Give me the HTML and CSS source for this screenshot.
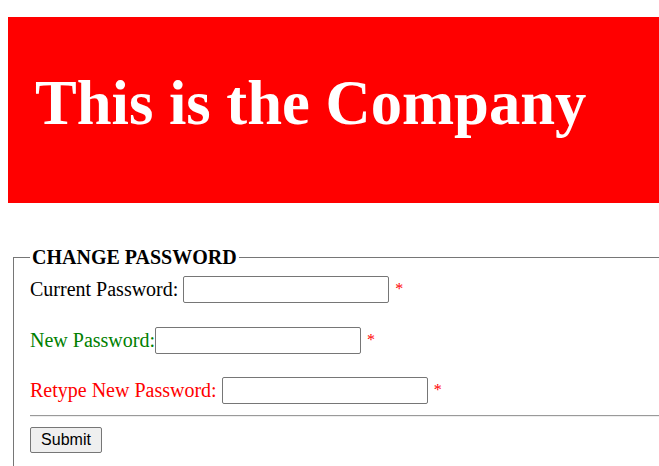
FILE: index.html
```html
<!DOCTYPE html>
<html>
<head>
<meta charset="utf-8">
<title>Change Password</title>
<link rel="stylesheet" href="styles.css">
</head>
<body>
<div class="banner">
  <h1 class="title">This is the Company</h1>
</div>
<form class="pw-form">
  <fieldset class="box">
    <legend class="box-title">CHANGE PASSWORD</legend>
    <div class="row">
      <label class="lbl">Current Password:&nbsp;</label><input class="field" type="password"><span class="req">*</span>
    </div>
    <div class="row">
      <label class="lbl lbl-green">New Password:</label><input class="field" type="password"><span class="req">*</span>
    </div>
    <div class="row">
      <label class="lbl lbl-red">Retype New Password:&nbsp;</label><input class="field" type="password"><span class="req">*</span>
    </div>
    <hr class="sep">
    <button class="submit" type="button">Submit</button>
  </fieldset>
</form>
</body>
</html>
```

FILE: styles.css
```css
html {
  overflow: hidden;
}
body {
  margin: 8px;
  width: 800px;
  font-family: "Liberation Serif", "Times New Roman", serif;
  font-size: 20px;
  background: #fff;
  color: #000;
}
.banner {
  margin-top: 9px;
  height: 186px;
  box-sizing: border-box;
  background: #ff0000;
  padding: 49px 0 0 27px;
}
.title {
  margin: 0;
  font-size: 62.6px;
  line-height: 74px;
  font-weight: bold;
  color: #fff;
}
.pw-form {
  margin: 43px 0 0 0;
}
.box {
  margin: 0 0 0 5px;
  border: 1px solid #767676;
  padding: 4px 15px 20px 16px;
}
.box-title {
  padding: 0 2px;
  font-weight: bold;
  font-size: 20px;
}
.row {
  display: flex;
  align-items: center;
  height: 27px;
  margin-bottom: 23.5px;
}
.row:first-of-type {
  margin-top: 3px;
}
.lbl {
  white-space: pre;
}
.lbl-green {
  color: #008000;
}
.lbl-red {
  color: #ff0000;
}
.field {
  box-sizing: border-box;
  width: 206px;
  height: 27px;
  margin: 0;
  border: 1px solid #767676;
  border-radius: 2px;
  padding: 1px 2px;
}
.req {
  color: #ff0000;
  margin-left: 6px;
  align-self: flex-start;
  font-size: 16px;
  line-height: 16px;
  margin-top: 5px;
}
.sep {
  margin: -13px 0 10px 0;
  border: 0;
  border-top: 1px solid #9a9a9a;
  border-bottom: 1px solid #eeeeee;
  height: 0;
}
.submit {
  font-family: Arial, "Liberation Sans", sans-serif;
  font-size: 16px;
  width: 72px;
  height: 26px;
  padding: 0;
  background: #efefef;
  border: 1px solid #767676;
  border-radius: 2px;
  color: #000;
}
```
